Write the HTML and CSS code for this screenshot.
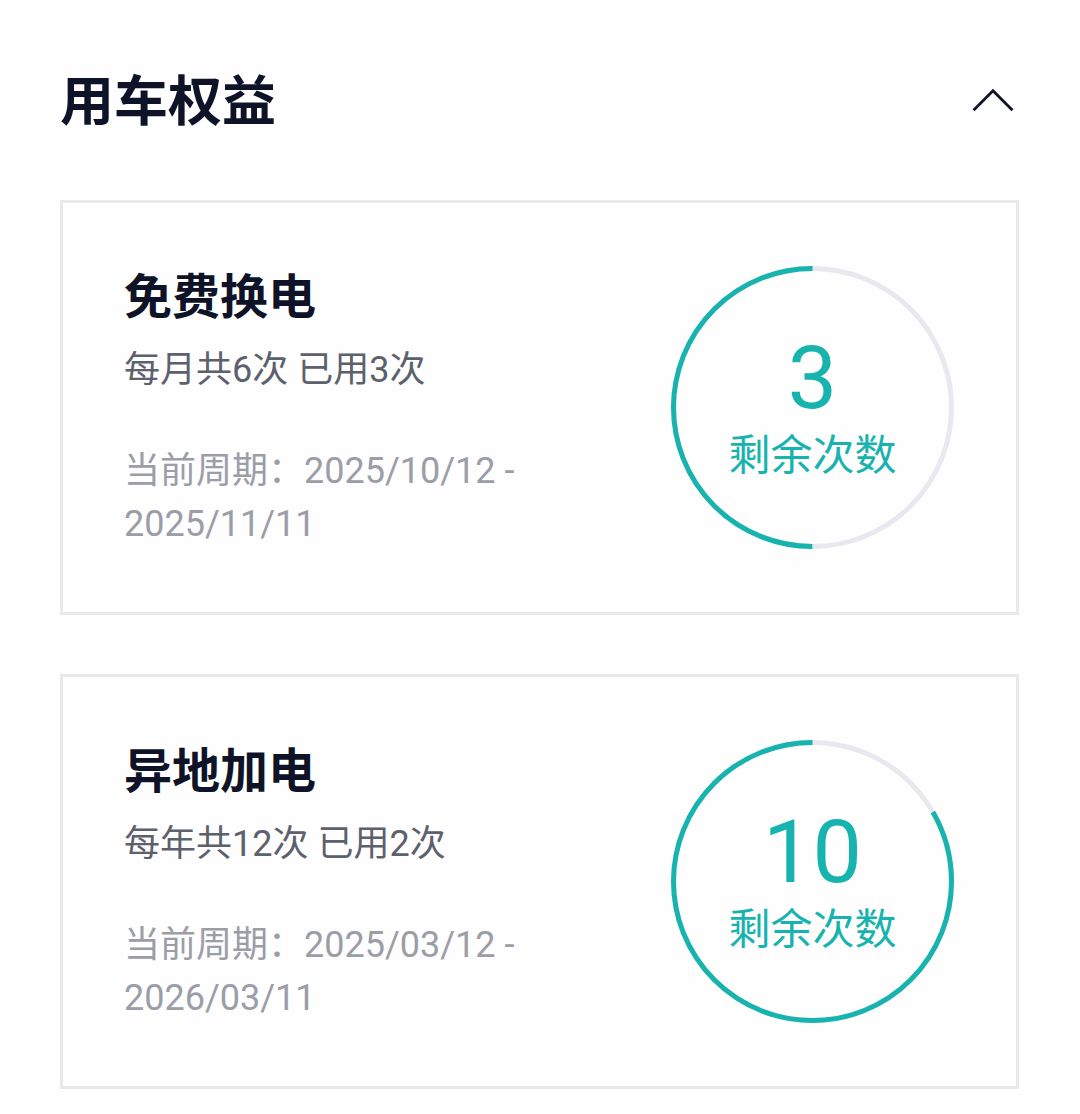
FILE: index.html
```html
<!DOCTYPE html>
<html lang="zh-CN">
<head>
<meta charset="utf-8">
<title>用车权益</title>
<link rel="stylesheet" href="styles.css">
</head>
<body>
<div class="page">
  <header class="section-head">
    <h1 class="section-title">用车权益</h1>
    <svg class="chevron" width="44" height="26" viewBox="0 0 44 26" aria-hidden="true">
      <path d="M2 23 L22 3 L42 23" fill="none" stroke="#0f1328" stroke-width="3" stroke-linecap="square" stroke-linejoin="miter"/>
    </svg>
  </header>

  <section class="card">
    <div class="info">
      <h2 class="card-title">免费换电</h2>
      <p class="usage">每月共6次 已用3次</p>
      <p class="period">当前周期：2025/10/12 - 2025/11/11</p>
    </div>
    <div class="ring">
      <svg class="ring-svg" width="283" height="283" viewBox="0 0 283 283">
        <circle class="track" cx="141.5" cy="141.5" r="139"/>
        <circle class="progress" cx="141.5" cy="141.5" r="139" transform="rotate(-90 141.5 141.5)" style="stroke-dasharray: 0 436.68 436.68 0"/>
      </svg>
      <div class="ring-text">
        <div class="ring-num">3</div>
        <div class="ring-label">剩余次数</div>
      </div>
    </div>
  </section>

  <section class="card">
    <div class="info">
      <h2 class="card-title">异地加电</h2>
      <p class="usage">每年共12次 已用2次</p>
      <p class="period">当前周期：2025/03/12 - 2026/03/11</p>
    </div>
    <div class="ring">
      <svg class="ring-svg" width="283" height="283" viewBox="0 0 283 283">
        <circle class="track" cx="141.5" cy="141.5" r="139"/>
        <circle class="progress" cx="141.5" cy="141.5" r="139" transform="rotate(-90 141.5 141.5)" style="stroke-dasharray: 0 145.56 727.80 0"/>
      </svg>
      <div class="ring-text">
        <div class="ring-num">10</div>
        <div class="ring-label">剩余次数</div>
      </div>
    </div>
  </section>
</div>
</body>
</html>
```

FILE: styles.css
```css
* {
  box-sizing: border-box;
}

html, body {
  margin: 0;
  padding: 0;
  background: #fefefe;
}

body {
  font-family: Roboto, "Noto Sans CJK SC", "Noto Sans", sans-serif;
  color: #0f1328;
}

.page {
  padding: 70px 61px 0 60px;
}

.section-head {
  display: flex;
  align-items: center;
  justify-content: space-between;
  padding-left: 0;
  padding-right: 5px;
  height: 66px;
}

.section-title {
  margin: 0;
  font-size: 54px;
  font-weight: 700;
  line-height: 66px;
  color: #0f1328;
}

.chevron {
  display: block;
  width: 42px;
  height: 24px;
  margin-top: -6px;
}

.card {
  margin-top: 64px;
  border: 3px solid #e9e9ec;
  background: #fefefe;
  padding: 63px 62px 63px 61px;
  display: flex;
  align-items: flex-start;
  gap: 40px;
}

.card + .card {
  margin-top: 59px;
}

.info {
  flex: 1;
  min-width: 0;
}

.card-title {
  margin: 0;
  font-size: 48px;
  font-weight: 700;
  line-height: 64px;
  color: #0f1328;
}

.usage {
  margin: 16px 0 0;
  font-size: 36px;
  line-height: 48px;
  color: #5d606d;
}

.period {
  margin: 51px 0 -3px;
  font-size: 36px;
  line-height: 53px;
  color: #9b9da7;
  max-width: 470px;
}

.ring {
  display: grid;
  width: 283px;
  height: 283px;
  flex: none;
}

.ring-svg {
  grid-area: 1 / 1;
  display: block;
}

.track {
  fill: none;
  stroke: #e8e9ee;
  stroke-width: 5;
}

.progress {
  fill: none;
  stroke: #17b3ae;
  stroke-width: 5;
}

.ring-text {
  grid-area: 1 / 1;
  display: flex;
  flex-direction: column;
  align-items: center;
  justify-content: center;
  gap: 10px;
  color: #17b3ae;
}

.ring-num {
  font-size: 88px;
  line-height: 86px;
}

.ring-label {
  font-size: 42px;
  line-height: 50px;
}
```
